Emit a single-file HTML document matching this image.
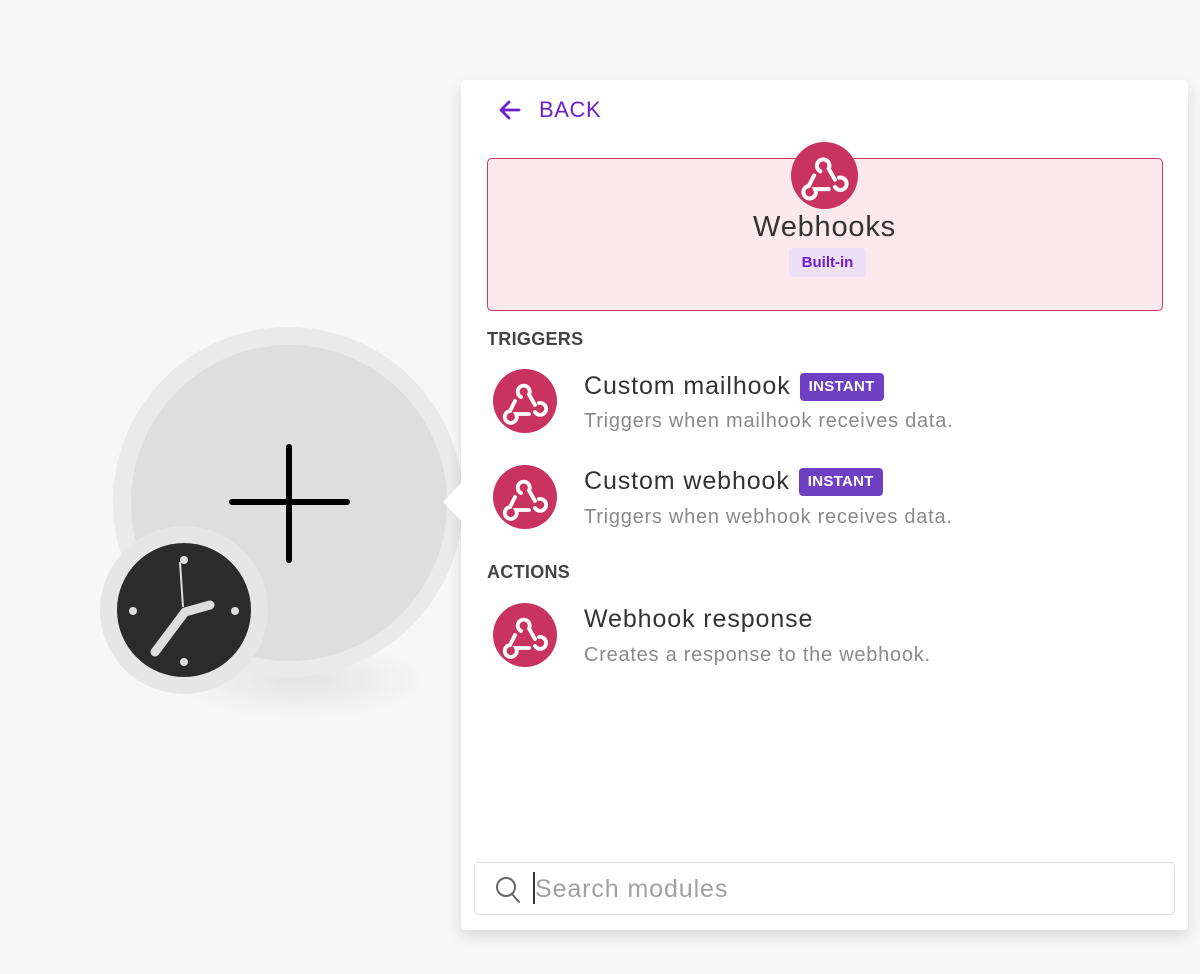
<!DOCTYPE html>
<html><head><meta charset="utf-8"><style>
*{box-sizing:border-box;margin:0;padding:0}
body{width:1200px;height:974px;background:#f7f7f7;font-family:"Liberation Sans",sans-serif;position:relative;overflow:hidden}
.abs{position:absolute}
.panel{left:461px;top:80px;width:727px;height:850px;background:#fff;border-radius:4px;box-shadow:0 6px 14px rgba(0,0,0,.12)}
.back{left:539px;top:97px;color:#6b1fd0;font-size:22px;letter-spacing:.6px}
.hero{left:487px;top:158px;width:676px;height:153px;background:#fbe9ed;border:1.5px solid #c93a63;border-radius:5px}
.title{left:461px;width:727px;text-align:center;top:211px;font-size:29px;color:#333;letter-spacing:.8px}
.builtin{left:789px;top:248px;width:77px;height:29px;background:#eddff5;border-radius:4px;color:#6b1fd0;font-weight:bold;font-size:15px;text-align:center;line-height:29px}
.sec{left:487px;font-weight:bold;font-size:18px;color:#444;letter-spacing:.3px}
.row{left:584px;display:flex;align-items:center;gap:9px}
.name{font-size:25px;color:#333;letter-spacing:.9px}
.desc{left:584px;font-size:20px;color:#8a8a8a;letter-spacing:.75px}
.inst{height:28px;background:#6f3fc4;color:#fff;font-weight:bold;font-size:15px;line-height:28px;padding:0 9px;border-radius:4px;letter-spacing:.3px}
.search{left:474px;top:862px;width:701px;height:53px;border:1px solid #ddd;border-radius:5px}
</style></head><body>
<svg class="abs" style="left:0;top:0" width="470" height="760">
<defs><radialGradient id="sh"><stop offset="0" stop-color="#000" stop-opacity=".08"/><stop offset="1" stop-color="#000" stop-opacity="0"/></radialGradient></defs>
<ellipse cx="300" cy="680" rx="130" ry="40" fill="url(#sh)"/>
<circle cx="288" cy="502" r="175" fill="#eaeaea"/>
<circle cx="289" cy="503" r="158" fill="#dedede"/>
<path d="M289 447V560M232 502H347" stroke="#000" stroke-width="6" stroke-linecap="round"/>
<circle cx="184" cy="610" r="84" fill="#e6e6e6"/>
<circle cx="184" cy="610" r="67" fill="#2b2b2b"/>
<circle cx="184" cy="560" r="4" fill="#ddd"/><circle cx="184" cy="662" r="4" fill="#ddd"/>
<circle cx="133" cy="611" r="4" fill="#ddd"/><circle cx="235" cy="611" r="4" fill="#ddd"/>
<path d="M180 562L183 607" stroke="#ddd" stroke-width="2"/>
<path d="M155 652L185 612L210 605" stroke="#ddd" stroke-width="9" stroke-linecap="round" stroke-linejoin="round" fill="none"/>
</svg>
<div class="abs panel"></div>
<svg class="abs" style="left:440px;top:480px" width="24" height="44"><path d="M24 0L3 22L24 44Z" fill="#fff"/></svg>
<svg class="abs" style="left:498px;top:99px" width="24" height="22"><path d="M21 11H4M11 3L3 11L11 19" stroke="#6b1fd0" stroke-width="2.8" fill="none" stroke-linecap="round" stroke-linejoin="round"/></svg>
<div class="abs back">BACK</div>
<div class="abs hero"></div>
<svg width="0" height="0" style="position:absolute"><defs><g id="wh"><path d="M28 28a6 6 0 1 1 8 -2.5l6 10.5M22 32l-5 10a6 6 0 1 0 6 3h13M42 43a6 6 0 1 0 4 -9" fill="none" stroke="#fff" stroke-width="3.8" stroke-linecap="round"/></g></defs></svg>
<svg class="abs" style="left:791px;top:142px" width="67" height="67" viewBox="0 0 64 64"><circle cx="32" cy="32" r="32" fill="#c8345f"/><use href="#wh"/></svg>
<div class="abs title">Webhooks</div>
<div class="abs builtin">Built-in</div>
<div class="abs sec" style="top:329px">TRIGGERS</div>
<svg class="abs" style="left:493px;top:369px" width="64" height="64" viewBox="0 0 64 64"><circle cx="32" cy="32" r="32" fill="#c8345f"/><use href="#wh"/></svg>
<div class="abs row" style="top:372px"><span class="name">Custom mailhook</span><span class="inst">INSTANT</span></div>
<div class="abs desc" style="top:410px">Triggers when mailhook receives data.</div>
<svg class="abs" style="left:493px;top:465px" width="64" height="64" viewBox="0 0 64 64"><circle cx="32" cy="32" r="32" fill="#c8345f"/><use href="#wh"/></svg>
<div class="abs row" style="top:467px"><span class="name">Custom webhook</span><span class="inst">INSTANT</span></div>
<div class="abs desc" style="top:506px">Triggers when webhook receives data.</div>
<div class="abs sec" style="top:562px">ACTIONS</div>
<svg class="abs" style="left:493px;top:603px" width="64" height="64" viewBox="0 0 64 64"><circle cx="32" cy="32" r="32" fill="#c8345f"/><use href="#wh"/></svg>
<div class="abs row" style="top:605px"><span class="name">Webhook response</span></div>
<div class="abs desc" style="top:644px">Creates a response to the webhook.</div>
<div class="abs search"></div>
<svg class="abs" style="left:494px;top:875px" width="28" height="30"><circle cx="12" cy="12" r="9" stroke="#666" stroke-width="2" fill="none"/><path d="M18 19L25 27" stroke="#666" stroke-width="2" stroke-linecap="round"/></svg>
<div class="abs" style="left:533px;top:872px;width:1.5px;height:32px;background:#333"></div>
<div class="abs" style="left:535px;top:875px;font-size:25px;color:#a0a0a0;letter-spacing:.9px">Search modules</div>
</body></html>
